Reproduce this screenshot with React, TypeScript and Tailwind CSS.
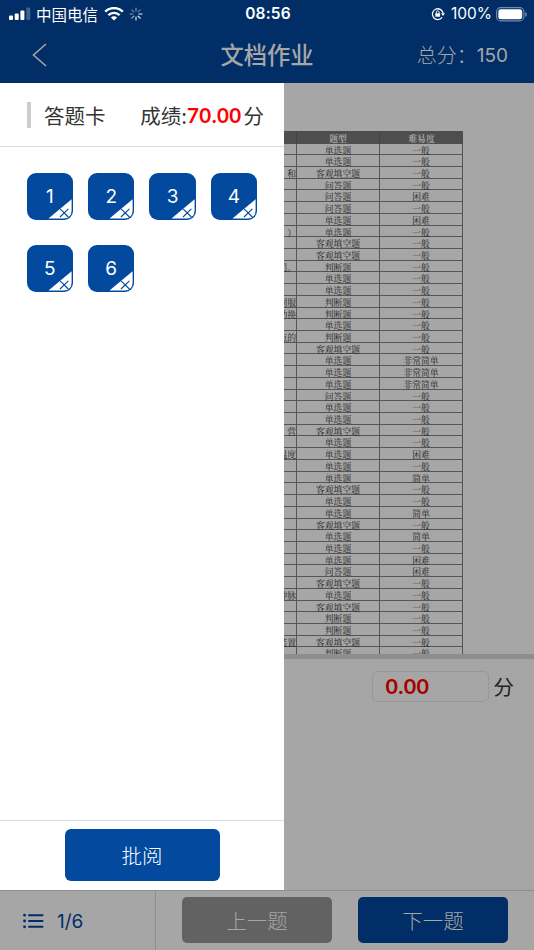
type Row = { kind: string; level?: string; tail?: string };

const rows: Row[] = [
  { kind: "单选题" },
  { kind: "单选题" },
  { kind: "客观填空题", tail: "和" },
  { kind: "问答题" },
  { kind: "问答题", level: "困难" },
  { kind: "问答题" },
  { kind: "单选题", level: "困难" },
  { kind: "单选题", tail: "）" },
  { kind: "客观填空题" },
  { kind: "客观填空题" },
  { kind: "判断题", tail: "司。" },
  { kind: "单选题" },
  { kind: "单选题" },
  { kind: "判断题", tail: "伺服" },
  { kind: "判断题", tail: "动换" },
  { kind: "单选题" },
  { kind: "判断题", tail: "点的" },
  { kind: "客观填空题" },
  { kind: "单选题", level: "非常简单" },
  { kind: "单选题", level: "非常简单" },
  { kind: "单选题", level: "非常简单" },
  { kind: "问答题" },
  { kind: "单选题" },
  { kind: "单选题" },
  { kind: "客观填空题", tail: "营" },
  { kind: "单选题" },
  { kind: "单选题", level: "困难", tail: "温度" },
  { kind: "单选题" },
  { kind: "单选题", level: "简单" },
  { kind: "客观填空题" },
  { kind: "单选题" },
  { kind: "单选题", level: "简单" },
  { kind: "客观填空题" },
  { kind: "单选题", level: "简单" },
  { kind: "单选题" },
  { kind: "单选题", level: "困难" },
  { kind: "问答题", level: "困难" },
  { kind: "客观填空题" },
  { kind: "单选题", tail: "钟脉" },
  { kind: "客观填空题" },
  { kind: "判断题" },
  { kind: "判断题" },
  { kind: "客观填空题", tail: "装置" },
  { kind: "判断题" },
];

function StatusBar() {
  return (
    <div className="flex h-7 items-center text-white">
      <div className="flex flex-1 items-center pl-[9px]">
        <svg width="22" height="14" viewBox="0 0 22 14" fill="currentColor">
          <rect x="0" y="8.5" width="4" height="4.5" rx="1" />
          <rect x="5.7" y="6.5" width="4" height="6.5" rx="1" />
          <rect x="11.4" y="3.5" width="4" height="9.5" rx="1" />
          <rect x="17.3" y="0.5" width="4" height="12.5" rx="1" opacity="0.25" />
        </svg>
        <span className="ml-[5px] text-[15.5px] leading-[26px]">中国电信</span>
        <svg className="ml-[6px]" width="20" height="14" viewBox="0 0 20 14" fill="none" stroke="currentColor">
          <path d="M1.2 4.7a12.6 12.6 0 0 1 17.6 0" strokeWidth="2.5" />
          <path d="M4.4 8.1a8.1 8.1 0 0 1 11.2 0" strokeWidth="2.4" />
          <path d="M10 13.5 6.9 10.5a4.4 4.4 0 0 1 6.2 0z" fill="currentColor" stroke="none" />
        </svg>
        <svg className="ml-[5px]" width="14" height="14" viewBox="0 0 14 14" stroke="currentColor" strokeWidth="1.2" strokeLinecap="round">
          <path d="M7 1v3" opacity=".5" />
          <path d="m11.2 2.8-2.1 2.1" opacity=".4" />
          <path d="M13 7h-3" opacity=".95" />
          <path d="m11.2 11.2-2.1-2.1" opacity=".95" />
          <path d="M7 13v-3" opacity=".9" />
          <path d="m2.8 11.2 2.1-2.1" opacity=".6" />
          <path d="M1 7h3" opacity=".5" />
          <path d="m2.8 2.8 2.1 2.1" opacity=".4" />
        </svg>
      </div>
      <span className="font-['Inter'] text-[15.5px] font-semibold tracking-[0.2px]">08:56</span>
      <div className="flex flex-1 items-center justify-end pr-[7px]">
        <svg width="14" height="14" viewBox="0 0 14 14" fill="none" stroke="currentColor" strokeWidth="1.3">
          <path d="M11.1 10.4A5.4 5.4 0 1 1 12.1 6.2" />
          <path d="M9.9 6.2h4.1l-2 2.7z" fill="currentColor" stroke="none" />
          <rect x="4.3" y="6.2" width="4.8" height="3.6" rx=".5" fill="currentColor" stroke="none" />
          <path d="M5.3 6.5V5.3a1.4 1.4 0 0 1 2.8 0v1.2" strokeWidth="1" />
        </svg>
        <span className="ml-[6px] font-['Inter'] text-[15.5px]">100%</span>
        <svg className="ml-[4px]" width="31" height="15" viewBox="0 0 31 15" fill="none">
          <rect x=".6" y=".6" width="27.3" height="13.3" rx="4" stroke="#fff" strokeOpacity=".45" strokeWidth="1.1" />
          <rect x="2.3" y="2.3" width="23.9" height="9.9" rx="2.5" fill="#fff" />
          <path d="M29.3 5v5c1-.4 1.5-1.4 1.5-2.5S30.3 5.4 29.3 5z" fill="#fff" fillOpacity=".5" />
        </svg>
      </div>
    </div>
  );
}

function Header() {
  return (
    <header className="h-[83px] shrink-0 bg-[#012e66]">
      <StatusBar />
      <div className="grid h-[54px] grid-cols-3 items-center text-[#a6a6a6]">
        <svg className="ml-[32px]" width="15" height="24" viewBox="0 0 15 24" fill="none" stroke="currentColor" strokeWidth="1.6">
          <path d="M14 1 1.5 12 14 23" />
        </svg>
        <h1 className="text-center text-[23.3px] leading-none font-medium">文档作业</h1>
        <div className="flex items-center justify-end pr-[26px] text-[20px] leading-none font-light">
          总分：<span className="font-['Inter'] text-[19px] font-normal">150</span>
        </div>
      </div>
    </header>
  );
}

function AnswerTile({ n }: { n: number }) {
  return (
    <button className="relative h-[46.3px] w-[46.3px] overflow-hidden rounded-[9px] bg-[#034a9f] pt-[2px] font-['Inter'] text-[19px] text-white">
      {n}
      <svg className="absolute right-0 bottom-0" width="26" height="22" viewBox="0 0 26 22">
        <path d="M1.5 20.4 24.6 1.2V12.5Q24.6 20.4 16.5 20.4Z" fill="#fff" />
        <path d="m13 10.8 8.4 8.2m0-8.2L13 19" stroke="#034a9f" strokeWidth="1.1" />
      </svg>
    </button>
  );
}

function AnswerCard() {
  return (
    <aside className="flex w-[284px] shrink-0 flex-col bg-white text-[#333]">
      <div className="flex h-[64px] items-center border-b-[1.5px] border-[#dcdcdc] pt-px pr-[20px] pl-[27px] text-[20.5px] leading-none">
        <span className="h-[26px] w-1 bg-[#ccc]" />
        <span className="ml-[13px]">答题卡</span>
        <span className="ml-auto flex items-center">
          成绩:<b className="font-['Lato'] text-[20.5px] font-bold tracking-[0.4px] text-[#f00]">70.00</b>
          <span className="ml-[2px]">分</span>
        </span>
      </div>
      <div className="grid grid-cols-[repeat(4,46.3px)] gap-x-[15.1px] gap-y-[25.8px] pt-[26.4px] pl-[26.7px]">
        {[1, 2, 3, 4, 5, 6].map((n) => (
          <AnswerTile key={n} n={n} />
        ))}
      </div>
      <div className="mt-auto flex h-[70.5px] justify-center border-t-[1.5px] border-[#dcdcdc] pt-[8.5px]">
        <button className="h-[52px] w-[155px] rounded-[6px] bg-[#034a9f] text-[20.5px] leading-none font-light text-white">批阅</button>
      </div>
    </aside>
  );
}

function QuestionTable() {
  return (
    <div className="h-[571px] overflow-hidden pt-[48px] font-['Noto_Serif_CJK_SC','Noto_Sans_CJK_SC',serif] text-[8.8px] leading-[13px] text-[#222]">
      <div className="grid h-[12.5px] w-[179px] grid-cols-[13px_83px_83px] bg-[#4e4e4e] text-center font-bold text-[#a6a6a6]">
        <span className="border-r border-[#444]" />
        <span className="border-r border-[#444] pt-[1px]">题型</span>
        <span className="pt-[1px]">难易度</span>
      </div>
      {rows.map((row, i) => (
        <div key={i} className="grid h-[11.73px] w-[179px] grid-cols-[13px_83px_83px] border-b border-[#555] text-center">
          <span className="flex justify-end overflow-hidden border-r border-[#555] whitespace-nowrap">{row.tail}</span>
          <span className="border-r border-[#555]">{row.kind}</span>
          <span className="border-r border-[#555]">{row.level ?? "一般"}</span>
        </div>
      ))}
    </div>
  );
}

function Footer() {
  return (
    <footer className="flex h-[60px] shrink-0 border-t-[1.5px] border-[#8e8e8e] bg-[#a6a6a6] text-[20.5px] leading-none">
      <div className="flex h-full w-[156px] items-center border-r border-[#8e8e8e] pt-px pl-[23px] text-[#012e66]">
        <svg width="21" height="16" viewBox="0 0 21 16" stroke="currentColor" strokeLinecap="round">
          <path d="M6 2.2h13.5M6 8h13.5M6 13.8h13.5" strokeWidth="2" />
          <path d="M1.5 2.2h.1M1.5 8h.1M1.5 13.8h.1" strokeWidth="2.8" />
        </svg>
        <span className="ml-[13px] font-['Inter'] text-[19px]">1/6</span>
      </div>
      <button className="mt-[6px] ml-[26px] h-[46px] w-[150px] rounded-[5px] bg-[#626262] font-light text-[#a6a6a6]">上一题</button>
      <button className="mt-[6px] ml-[26px] h-[46px] w-[150px] rounded-[5px] bg-[#012e66] font-light text-[#a6a6a6]">下一题</button>
    </footer>
  );
}

export default function App() {
  return (
    <div className="flex h-[950px] w-[534px] flex-col overflow-hidden bg-[#a6a6a6] font-['Noto_Sans_CJK_SC',sans-serif]">
      <Header />
      <main className="flex min-h-0 flex-1">
        <AnswerCard />
        <section className="min-w-0 flex-1">
          <QuestionTable />
          <div className="h-[5px] bg-[#8e8e8e]" />
          <div className="mt-[12px] flex items-center justify-end pr-[20px] text-[20.5px] leading-none text-[#222]">
            <div className="mr-[5px] flex h-[31px] w-[117px] items-center rounded-[5px] border border-[#989898] pl-[13px] font-['Lato'] text-[21.5px] font-bold tracking-[0.3px] text-[#a60000]">
              0.00
            </div>
            分
          </div>
        </section>
      </main>
      <Footer />
    </div>
  );
}
